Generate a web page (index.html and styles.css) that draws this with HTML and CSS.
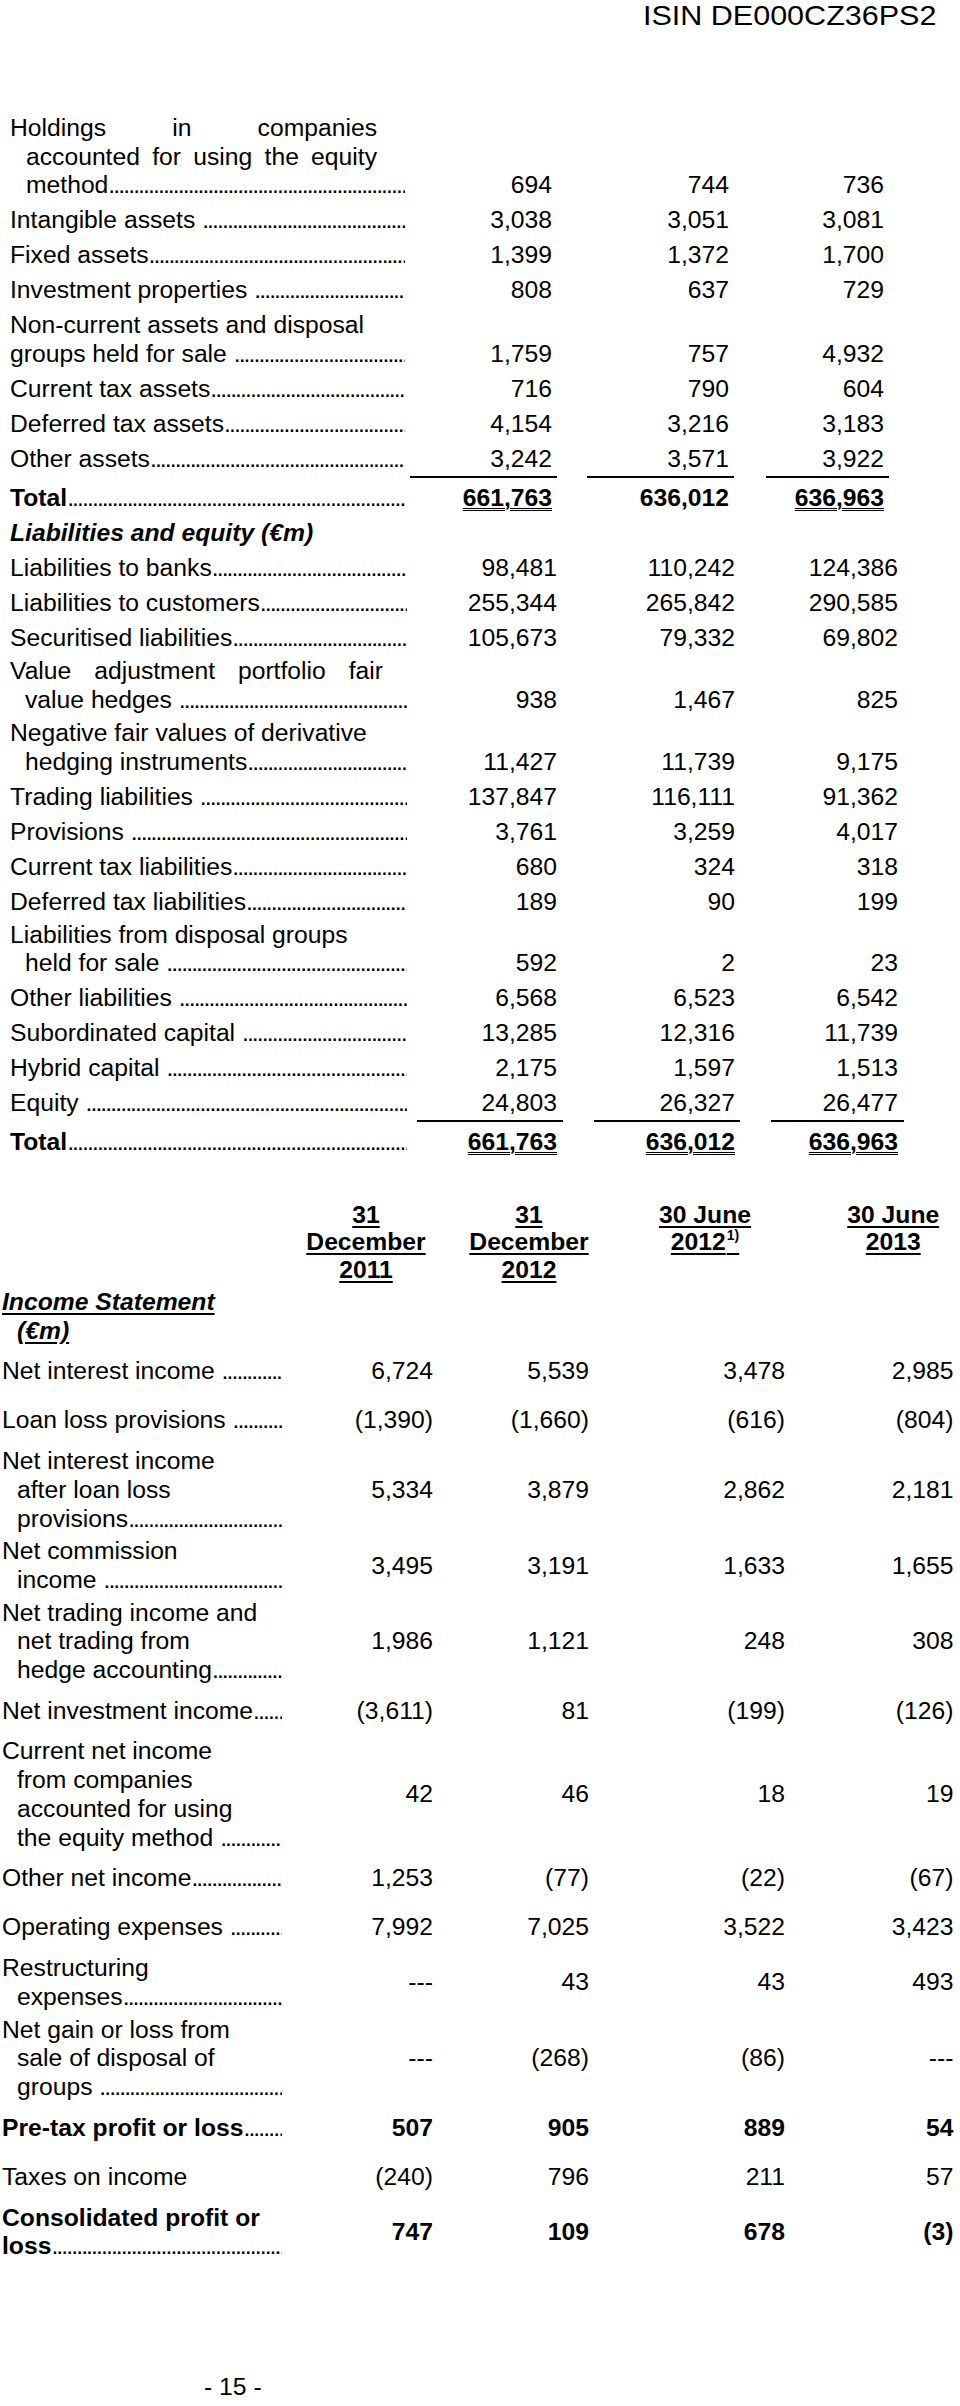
FILE: index.html
```html
<!DOCTYPE html>
<html lang="en">
<head>
<meta charset="utf-8">
<title>ISIN DE000CZ36PS2</title>
<link rel="stylesheet" href="styles.css">
</head>
<body>
<div class="page">
  <div class="isin"><span>ISIN DE000CZ36PS2</span></div>

  <section class="bs assets">
    <div class="row">
      <div class="lbl">
        <div class="ln just">Holdings in companies</div>
        <div class="ln ind just">accounted for using the equity</div>
        <div class="ln ind lead"><span>method</span></div>
      </div>
      <div class="v">694</div><div class="v">744</div><div class="v v3">736</div>
    </div>
    <div class="row">
      <div class="lbl"><div class="ln lead"><span>Intangible assets </span></div></div>
      <div class="v">3,038</div><div class="v">3,051</div><div class="v v3">3,081</div>
    </div>
    <div class="row">
      <div class="lbl"><div class="ln lead"><span>Fixed assets</span></div></div>
      <div class="v">1,399</div><div class="v">1,372</div><div class="v v3">1,700</div>
    </div>
    <div class="row">
      <div class="lbl"><div class="ln lead"><span>Investment properties </span></div></div>
      <div class="v">808</div><div class="v">637</div><div class="v v3">729</div>
    </div>
    <div class="row">
      <div class="lbl">
        <div class="ln">Non-current assets and disposal</div>
        <div class="ln lead"><span>groups held for sale </span></div>
      </div>
      <div class="v">1,759</div><div class="v">757</div><div class="v v3">4,932</div>
    </div>
    <div class="row">
      <div class="lbl"><div class="ln lead"><span>Current tax assets</span></div></div>
      <div class="v">716</div><div class="v">790</div><div class="v v3">604</div>
    </div>
    <div class="row">
      <div class="lbl"><div class="ln lead"><span>Deferred tax assets</span></div></div>
      <div class="v">4,154</div><div class="v">3,216</div><div class="v v3">3,183</div>
    </div>
    <div class="row">
      <div class="lbl"><div class="ln lead"><span>Other assets</span></div></div>
      <div class="v ul">3,242</div><div class="v ul">3,571</div><div class="v v3 ul">3,922</div>
    </div>
    <div class="row tot">
      <div class="lbl"><div class="ln lead"><span>Total</span></div></div>
      <div class="v"><span class="dbl">661,763</span></div><div class="v">636,012</div><div class="v v3"><span class="dbl">636,963</span></div>
    </div>
    <div class="row">
      <div class="lbl"><div class="ln sub">Liabilities and equity (€m)</div></div>
    </div>
  </section>

  <section class="bs liab">
    <div class="row">
      <div class="lbl"><div class="ln lead"><span>Liabilities to banks</span></div></div>
      <div class="v">98,481</div><div class="v v2">110,242</div><div class="v v3">124,386</div>
    </div>
    <div class="row">
      <div class="lbl"><div class="ln lead"><span>Liabilities to customers</span></div></div>
      <div class="v">255,344</div><div class="v v2">265,842</div><div class="v v3">290,585</div>
    </div>
    <div class="row">
      <div class="lbl"><div class="ln lead"><span>Securitised liabilities</span></div></div>
      <div class="v">105,673</div><div class="v v2">79,332</div><div class="v v3">69,802</div>
    </div>
    <div class="row multi">
      <div class="lbl">
        <div class="ln just wide">Value adjustment portfolio fair</div>
        <div class="ln ind lead"><span>value hedges </span></div>
      </div>
      <div class="v">938</div><div class="v v2">1,467</div><div class="v v3">825</div>
    </div>
    <div class="row multi">
      <div class="lbl">
        <div class="ln">Negative fair values of derivative</div>
        <div class="ln ind lead"><span>hedging instruments</span></div>
      </div>
      <div class="v">11,427</div><div class="v v2">11,739</div><div class="v v3">9,175</div>
    </div>
    <div class="row">
      <div class="lbl"><div class="ln lead"><span>Trading liabilities </span></div></div>
      <div class="v">137,847</div><div class="v v2">116,111</div><div class="v v3">91,362</div>
    </div>
    <div class="row">
      <div class="lbl"><div class="ln lead"><span>Provisions </span></div></div>
      <div class="v">3,761</div><div class="v v2">3,259</div><div class="v v3">4,017</div>
    </div>
    <div class="row">
      <div class="lbl"><div class="ln lead"><span>Current tax liabilities</span></div></div>
      <div class="v">680</div><div class="v v2">324</div><div class="v v3">318</div>
    </div>
    <div class="row">
      <div class="lbl"><div class="ln lead"><span>Deferred tax liabilities</span></div></div>
      <div class="v">189</div><div class="v v2">90</div><div class="v v3">199</div>
    </div>
    <div class="row multi">
      <div class="lbl">
        <div class="ln">Liabilities from disposal groups</div>
        <div class="ln ind lead"><span>held for sale </span></div>
      </div>
      <div class="v">592</div><div class="v v2">2</div><div class="v v3">23</div>
    </div>
    <div class="row">
      <div class="lbl"><div class="ln lead"><span>Other liabilities </span></div></div>
      <div class="v">6,568</div><div class="v v2">6,523</div><div class="v v3">6,542</div>
    </div>
    <div class="row">
      <div class="lbl"><div class="ln lead"><span>Subordinated capital </span></div></div>
      <div class="v">13,285</div><div class="v v2">12,316</div><div class="v v3">11,739</div>
    </div>
    <div class="row">
      <div class="lbl"><div class="ln lead"><span>Hybrid capital </span></div></div>
      <div class="v">2,175</div><div class="v v2">1,597</div><div class="v v3">1,513</div>
    </div>
    <div class="row">
      <div class="lbl"><div class="ln lead"><span>Equity </span></div></div>
      <div class="v ul">24,803</div><div class="v v2 ul">26,327</div><div class="v v3 ul">26,477</div>
    </div>
    <div class="row tot">
      <div class="lbl"><div class="ln lead"><span>Total</span></div></div>
      <div class="v"><span class="dbl">661,763</span></div><div class="v v2"><span class="dbl">636,012</span></div><div class="v v3"><span class="dbl">636,963</span></div>
    </div>
  </section>

  <section class="is">
    <div class="dates">
      <div class="d d1"><span class="u">31</span><br><span class="u">December</span><br><span class="u">2011</span></div>
      <div class="d d2"><span class="u">31</span><br><span class="u">December</span><br><span class="u">2012</span></div>
      <div class="d d3"><span class="u">30 June</span><br><span class="u">2012<sup>1)</sup></span></div>
      <div class="d d4"><span class="u">30 June</span><br><span class="u">2013</span></div>
    </div>
    <div class="is-title">
      <div class="ln"><span class="u">Income Statement</span></div>
      <div class="ln ind"><span class="u">(€m)</span></div>
    </div>

    <div class="r first pl">
      <div class="lbl"><div class="ln lead"><span>Net interest income </span></div></div>
      <div class="v">6,724</div><div class="v">5,539</div><div class="v">3,478</div><div class="v">2,985</div>
    </div>
    <div class="r pm">
      <div class="lbl"><div class="ln lead"><span>Loan loss provisions </span></div></div>
      <div class="v">(1,390)</div><div class="v">(1,660)</div><div class="v">(616)</div><div class="v">(804)</div>
    </div>
    <div class="r ps">
      <div class="lbl">
        <div class="ln">Net interest income</div>
        <div class="ln ind">after loan loss</div>
        <div class="ln ind lead"><span>provisions</span></div>
      </div>
      <div class="v">5,334</div><div class="v">3,879</div><div class="v">2,862</div><div class="v">2,181</div>
    </div>
    <div class="r ps">
      <div class="lbl">
        <div class="ln">Net commission</div>
        <div class="ln ind lead"><span>income </span></div>
      </div>
      <div class="v">3,495</div><div class="v">3,191</div><div class="v">1,633</div><div class="v">1,655</div>
    </div>
    <div class="r pm">
      <div class="lbl">
        <div class="ln">Net trading income and</div>
        <div class="ln ind">net trading from</div>
        <div class="ln ind lead"><span>hedge accounting</span></div>
      </div>
      <div class="v">1,986</div><div class="v">1,121</div><div class="v">248</div><div class="v">308</div>
    </div>
    <div class="r pm">
      <div class="lbl"><div class="ln lead"><span>Net investment income</span></div></div>
      <div class="v">(3,611)</div><div class="v">81</div><div class="v">(199)</div><div class="v">(126)</div>
    </div>
    <div class="r pm">
      <div class="lbl">
        <div class="ln">Current net income</div>
        <div class="ln ind">from companies</div>
        <div class="ln ind">accounted for using</div>
        <div class="ln ind lead"><span>the equity method </span></div>
      </div>
      <div class="v">42</div><div class="v">46</div><div class="v">18</div><div class="v">19</div>
    </div>
    <div class="r pl">
      <div class="lbl"><div class="ln lead"><span>Other net income</span></div></div>
      <div class="v">1,253</div><div class="v">(77)</div><div class="v">(22)</div><div class="v">(67)</div>
    </div>
    <div class="r pm">
      <div class="lbl"><div class="ln lead"><span>Operating expenses </span></div></div>
      <div class="v">7,992</div><div class="v">7,025</div><div class="v">3,522</div><div class="v">3,423</div>
    </div>
    <div class="r ps">
      <div class="lbl">
        <div class="ln">Restructuring</div>
        <div class="ln ind lead"><span>expenses</span></div>
      </div>
      <div class="v">---</div><div class="v">43</div><div class="v">43</div><div class="v">493</div>
    </div>
    <div class="r pm">
      <div class="lbl">
        <div class="ln">Net gain or loss from</div>
        <div class="ln ind">sale of disposal of</div>
        <div class="ln ind lead"><span>groups </span></div>
      </div>
      <div class="v">---</div><div class="v">(268)</div><div class="v">(86)</div><div class="v">---</div>
    </div>
    <div class="r pl bold">
      <div class="lbl"><div class="ln lead"><span>Pre-tax profit or loss</span></div></div>
      <div class="v">507</div><div class="v">905</div><div class="v">889</div><div class="v">54</div>
    </div>
    <div class="r pm">
      <div class="lbl"><div class="ln">Taxes on income</div></div>
      <div class="v">(240)</div><div class="v">796</div><div class="v">211</div><div class="v">57</div>
    </div>
    <div class="r bold">
      <div class="lbl">
        <div class="ln">Consolidated profit or</div>
        <div class="ln lead"><span>loss</span></div>
      </div>
      <div class="v">747</div><div class="v">109</div><div class="v">678</div><div class="v">(3)</div>
    </div>
  </section>

  <div class="pageno">- 15 -</div>
</div>
</body>
</html>
```

FILE: styles.css
```css
html, body {
  margin: 0;
  padding: 0;
  background: #ffffff;
}

body {
  color: #000000;
  font-family: "Liberation Sans", Arial, Helvetica, sans-serif;
  font-size: 24.7px;
  line-height: 28.7px;
}

.page {
  width: 960px;
}

.isin {
  font-size: 27.5px;
  line-height: 32px;
  text-align: right;
  padding-right: 24px;
}

.isin span {
  display: inline-block;
  transform: scaleX(1.11);
  transform-origin: right center;
}

/* ---------- label cells ---------- */

.lbl {
  min-width: 0;
}

.ln {
  white-space: nowrap;
}

.just {
  white-space: normal;
  text-align: justify;
  text-align-last: justify;
  margin-right: 28px;
}

.just.wide {
  margin-right: 24px;
}

.ind {
  padding-left: 16px;
}

.lead {
  display: flex;
}

.lead span {
  white-space: pre;
  flex: none;
}

.lead::after {
  content: "................................................................................................................";
  flex: 1 1 0;
  min-width: 0;
  overflow: hidden;
  white-space: nowrap;
  letter-spacing: -1.9px;
  font-weight: normal;
}

.sub {
  font-weight: bold;
  font-style: italic;
}

/* ---------- balance sheet ---------- */

.bs {
  padding-left: 10px;
}

.assets {
  margin-top: 82px;
}

.bs .row {
  display: grid;
  align-items: last baseline;
  padding-bottom: 6.3px;
}

.assets .row {
  grid-template-columns: 400px 147px 177px 155px;
}

.assets .lbl {
  margin-right: 5px;
}

.liab .row {
  grid-template-columns: 407px 146px 177px 164px;
}

.liab .lbl {
  margin-right: 10px;
}

.liab .row.multi {
  margin-top: -2px;
}

.liab .ln.ind {
  padding-left: 15px;
}

.v {
  text-align: right;
  white-space: nowrap;
}

.bs .v {
  justify-self: end;
  box-sizing: border-box;
  width: 147px;
  padding-right: 5px;
}

.assets .v3 {
  width: 123px;
}

.liab .v {
  width: 146px;
  padding-right: 6px;
}

.liab .v2 {
  padding-right: 5px;
}

.liab .v3 {
  width: 133px;
  padding-right: 6px;
}

.ul {
  padding-bottom: 2px;
  border-bottom: 2px solid #000;
}

.tot {
  font-weight: bold;
}

.dbl {
  text-decoration: underline double;
  text-decoration-thickness: 1px;
  text-underline-offset: 2px;
}

/* ---------- income statement ---------- */

.is {
  padding-left: 2px;
}

.dates {
  display: grid;
  grid-template-columns: 280px 151px 156px 196px 168.5px;
  margin-top: 37.5px;
  font-weight: bold;
  line-height: 27.6px;
  white-space: nowrap;
}

.d {
  text-align: center;
}

.d1 { grid-column: 2; padding-left: 17px; }
.d2 { grid-column: 3; padding-left: 36px; }
.d3 { grid-column: 4; padding-left: 36px; }
.d4 { grid-column: 5; padding-left: 48px; }

.u {
  text-decoration: underline;
  text-decoration-thickness: 2px;
  text-underline-offset: 3px;
}

.d sup {
  font-size: 14px;
  line-height: 0;
  vertical-align: 10px;
  margin-left: 1px;
}

.is-title {
  margin-top: 4.7px;
  font-weight: bold;
  font-style: italic;
}

.is .ln.ind {
  padding-left: 15px;
}

.is .r {
  display: grid;
  grid-template-columns: 280px 151px 156px 196px 168.5px;
  align-items: center;
}

.is .r.first {
  margin-top: 11.6px;
}

.is .r.ps { padding-bottom: 4px; }
.is .r.pm { padding-bottom: 12px; }
.is .r.pl { padding-bottom: 20.5px; }

.bold {
  font-weight: bold;
}

.pageno {
  margin-top: 112.3px;
  padding-left: 204px;
}
```
